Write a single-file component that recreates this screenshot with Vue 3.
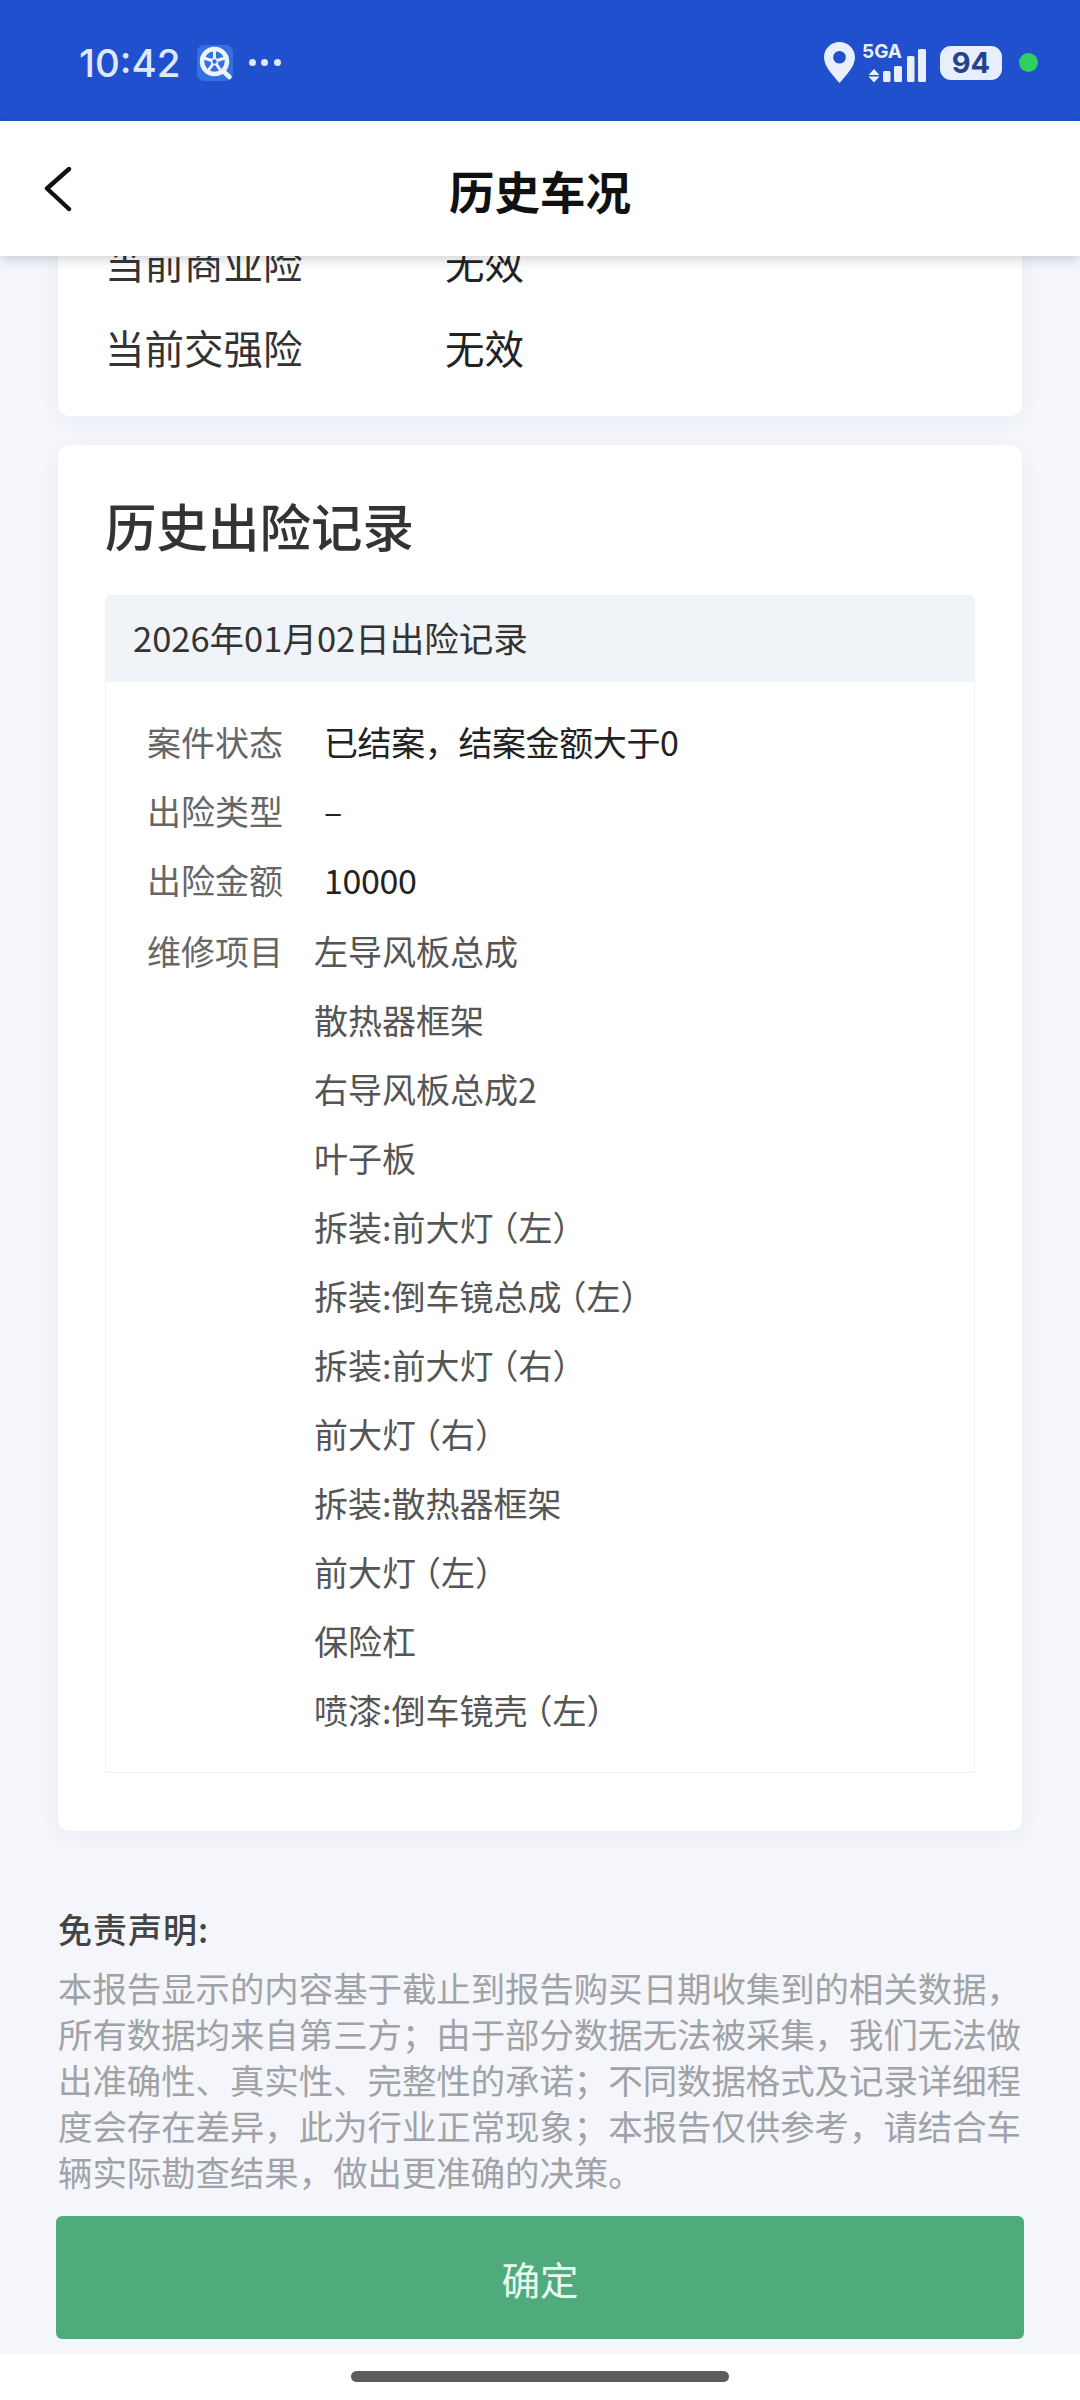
<template>
  <div class="page">
    <div class="watermarks">
      <span v-for="(m, i) in marks" :key="i" class="mark" :style="{ left: m[0] + 'px', top: m[1] + 'px' }">wx50101722X4</span>
    </div>

    <div class="status">
      <div class="status-left">
        <span class="time">10:42</span>
        <svg class="app-icon" width="36" height="36" viewBox="0 0 36 36">
          <rect width="36" height="36" rx="7" fill="#3470df" />
          <circle cx="17.500" cy="16.500" r="12.500" fill="none" stroke="#eef4fd" stroke-width="4.500" />
          <circle cx="17.500" cy="16.500" r="3" fill="none" stroke="#eef4fd" stroke-width="1.600" />
          <path d="M17.500 13.500V5M14.700 15.500 7 13M15.800 19 11 26M19.200 19 24 26M20.300 15.500 28 13" stroke="#eef4fd" stroke-width="3" />
          <path d="M26 26 32.500 32" stroke="#eef4fd" stroke-width="4.500" stroke-linecap="round" />
        </svg>
        <span class="dots"><i></i><i></i><i></i></span>
      </div>
      <div class="status-right">
        <svg width="31" height="41" viewBox="0 0 31 41">
          <path fill-rule="evenodd" fill="#eaf0fb" d="M15.500 0C7 0 0 6.800 0 15.300 0 25 10 34.500 15.500 41 21 34.500 31 25 31 15.300 31 6.800 24 0 15.500 0ZM15.500 9a6.300 6.300 0 1 1 0 12.600 6.300 6.300 0 0 1 0-12.600Z" />
        </svg>
        <div class="signal">
          <span class="net">5GA</span>
          <svg width="64" height="34" viewBox="0 0 64 34">
            <path d="M12 20 17.500 26H6.500ZM12 33.500 6.500 27.500H17.500Z" fill="#eaf0fb" />
            <rect x="21" y="22" width="7.500" height="11" rx="1.500" fill="#eaf0fb" />
            <rect x="32" y="17" width="8" height="16" rx="1.500" fill="#eaf0fb" />
            <rect x="45" y="7" width="7.500" height="26" rx="1.500" fill="#eaf0fb" />
            <rect x="56" y="0" width="8" height="33" rx="1.500" fill="#eaf0fb" />
          </svg>
        </div>
        <div class="battery">94</div>
        <i class="green-dot"></i>
      </div>
    </div>

    <div class="nav">
      <svg class="back" width="28" height="46" viewBox="0 0 28 46">
        <path d="M25 3 3 22.500 25 43" fill="none" stroke="#111" stroke-width="4.400" stroke-linecap="round" stroke-linejoin="round" />
      </svg>
      <span class="nav-title">历史车况</span>
    </div>

    <div class="content">
      <div class="card card-top">
        <div v-for="r in policy" :key="r.label" class="policy-row">
          <span class="policy-label">{{ r.label }}</span>
          <span class="policy-value">无效</span>
        </div>
      </div>

      <div class="card card-history">
        <h2 class="card-title">历史出险记录</h2>
        <div class="record">
          <div class="record-head">2026年01月02日出险记录</div>
          <div class="record-body">
            <div v-for="r in info" :key="r.label" class="row">
              <span class="row-label">{{ r.label }}</span>
              <span class="row-value">{{ r.value }}</span>
            </div>
            <div class="row row-items">
              <span class="row-label">维修项目</span>
              <div class="items">
                <div v-for="item in items" :key="item.name + item.side" class="item">
                  {{ item.name }}<span v-if="item.side" class="side">{{ item.side }}</span>
                </div>
              </div>
            </div>
          </div>
        </div>
      </div>

      <div class="notice">
        <div class="notice-title">免责声明:</div>
        <p class="notice-text">本报告显示的内容基于截止到报告购买日期收集到的相关数据，所有数据均来自第三方；由于部分数据无法被采集，我们无法做出准确性、真实性、完整性的承诺；不同数据格式及记录详细程度会存在差异，此为行业正常现象；本报告仅供参考，请结合车辆实际勘查结果，做出更准确的决策。</p>
      </div>
    </div>

    <button class="confirm">确定</button>

    <div class="home"><i></i></div>
  </div>
</template>

<script setup>
const policy = [{ label: "当前商业险" }, { label: "当前交强险" }];

const info = [
  { label: "案件状态", value: "已结案，结案金额大于0" },
  { label: "出险类型", value: "–" },
  { label: "出险金额", value: "10000" },
];

const items = [
  { name: "左导风板总成" },
  { name: "散热器框架" },
  { name: "右导风板总成2" },
  { name: "叶子板" },
  { name: "拆装:前大灯", side: "（左）" },
  { name: "拆装:倒车镜总成", side: "（左）" },
  { name: "拆装:前大灯", side: "（右）" },
  { name: "前大灯", side: "（右）" },
  { name: "拆装:散热器框架" },
  { name: "前大灯", side: "（左）" },
  { name: "保险杠" },
  { name: "喷漆:倒车镜壳", side: "（左）" },
];

// 水印中心点
const marks = [
  [780, 110], [505, 320], [260, 580], [897, 711], [30, 830], [651, 955],
  [360, 1150], [1000, 1347], [160, 1445], [796, 1590], [551, 1838],
  [950, 2140], [50, 2300],
];
</script>

<style scoped>
.page {
  position: relative;
  display: flex;
  flex-direction: column;
  width: 1080px;
  height: 2400px;
  overflow: hidden;
  background: #f4f6fb;
  font-family: "Noto Sans CJK SC", "Noto Sans", sans-serif;
}

.watermarks {
  position: absolute;
  inset: 0;
  z-index: 5;
  pointer-events: none;
}

.mark {
  position: absolute;
  transform: translate(-50%, -50%) rotate(45deg);
  font-family: "Liberation Sans", sans-serif;
  font-size: 34px;
  font-weight: 700;
  letter-spacing: 1px;
  color: rgba(30, 40, 60, 0.022);
  white-space: nowrap;
}

.status {
  display: flex;
  flex: none;
  align-items: center;
  justify-content: space-between;
  height: 121px;
  padding: 4px 42px 0 79px;
  box-sizing: border-box;
  background: #2150cf;
}

.status-left,
.status-right {
  display: flex;
  align-items: center;
}

.time {
  font-family: Inter, sans-serif;
  font-size: 38.500px;
  font-weight: 500;
  color: #dfe9fb;
}

.app-icon {
  margin-left: 16px;
}

.dots {
  display: flex;
  gap: 5.500px;
  margin-left: 16px;
}

.dots i {
  width: 7px;
  height: 7px;
  border-radius: 50%;
  background: #dfe9fb;
}

.status-right {
  height: 41px;
}

.signal {
  position: relative;
  align-self: flex-end;
  width: 64px;
  height: 34px;
  margin-left: 7px;
}

.signal svg {
  display: block;
}

.net {
  position: absolute;
  left: 0;
  top: -8px;
  font-family: Inter, sans-serif;
  font-size: 19px;
  font-weight: 700;
  line-height: 22px;
  color: #eaf0fb;
}

.battery {
  width: 62px;
  height: 34px;
  margin-left: 14px;
  border-radius: 11px;
  background: #e8eefb;
  font-family: Inter, sans-serif;
  font-size: 29px;
  font-weight: 700;
  line-height: 34px;
  text-align: center;
  color: #24438f;
}

.green-dot {
  width: 19px;
  height: 19px;
  margin-left: 17px;
  border-radius: 50%;
  background: #2fd05d;
}

.nav {
  position: relative;
  z-index: 2;
  display: flex;
  flex: none;
  align-items: center;
  justify-content: center;
  height: 135px;
  padding-top: 5px;
  box-sizing: border-box;
  background: #fff;
  box-shadow: 0 3px 12px rgba(30, 40, 60, 0.22);
}

.back {
  position: absolute;
  left: 44px;
  top: 45px;
}

.nav-title {
  font-size: 45.500px;
  font-weight: 700;
  line-height: 1;
  color: #111;
}

.content {
  flex: 1;
  min-height: 0;
  padding: 0 58px;
  overflow: hidden;
}

.card {
  border-radius: 12px;
  background: #fff;
  box-shadow: 0 6px 18px rgba(60, 80, 130, 0.05);
}

.card-top {
  margin-top: -37px;
  padding: 0 47px 27px;
}

.policy-row {
  display: flex;
  align-items: center;
  height: 85px;
  font-size: 39.500px;
}

.policy-label {
  width: 340px;
  color: #333;
}

.policy-value {
  color: #222;
}

.card-history {
  margin-top: 29px;
  padding: 43px 47px 58px;
}

.card-title {
  margin: 0;
  font-size: 51.500px;
  font-weight: 500;
  line-height: 74px;
  color: #333;
}

.record {
  margin-top: 33px;
  border: 1px solid #f0f1f4;
  border-top: 0;
  border-radius: 6px 6px 0 0;
}

.record-head {
  height: 87px;
  margin: 0 -1px;
  padding-left: 28px;
  background: #f0f3f8;
  border-radius: 6px 6px 0 0;
  font-size: 34.500px;
  line-height: 85px;
  color: #333;
}

.record-body {
  padding: 25px 0 28px 41px;
}

.row {
  display: flex;
  font-size: 34px;
  line-height: 69px;
}

.row-items {
  margin-top: 2px;
}

.row-label {
  flex: none;
  width: 136px;
  color: #666;
}

.row-value {
  margin-left: 41px;
  letter-spacing: -0.4px;
  color: #222;
}

.items {
  margin-left: 31px;
}

.item {
  color: #555;
}

.side {
  margin-left: -9px;
}

.notice {
  margin-top: 75px;
}

.notice-title {
  font-size: 34px;
  font-weight: 500;
  letter-spacing: 1px;
  line-height: 46px;
  color: #444;
}

.notice-text {
  margin: 12px 0 0;
  font-size: 34.400px;
  line-height: 46px;
  color: #a0a2a6;
}

.confirm {
  display: block;
  flex: none;
  width: 968px;
  height: 123px;
  margin: 0 auto 15px;
  padding: 0;
  border: 0;
  border-radius: 6px;
  background: #50ab7c;
  font-family: inherit;
  font-size: 38.500px;
  color: #e8fbf0;
}

.home {
  display: flex;
  flex: none;
  justify-content: center;
  height: 46px;
  padding-top: 17px;
  box-sizing: border-box;
  background: #fff;
}

.home i {
  width: 378px;
  height: 11px;
  border-radius: 6px;
  background: #5c5c5c;
}
</style>
